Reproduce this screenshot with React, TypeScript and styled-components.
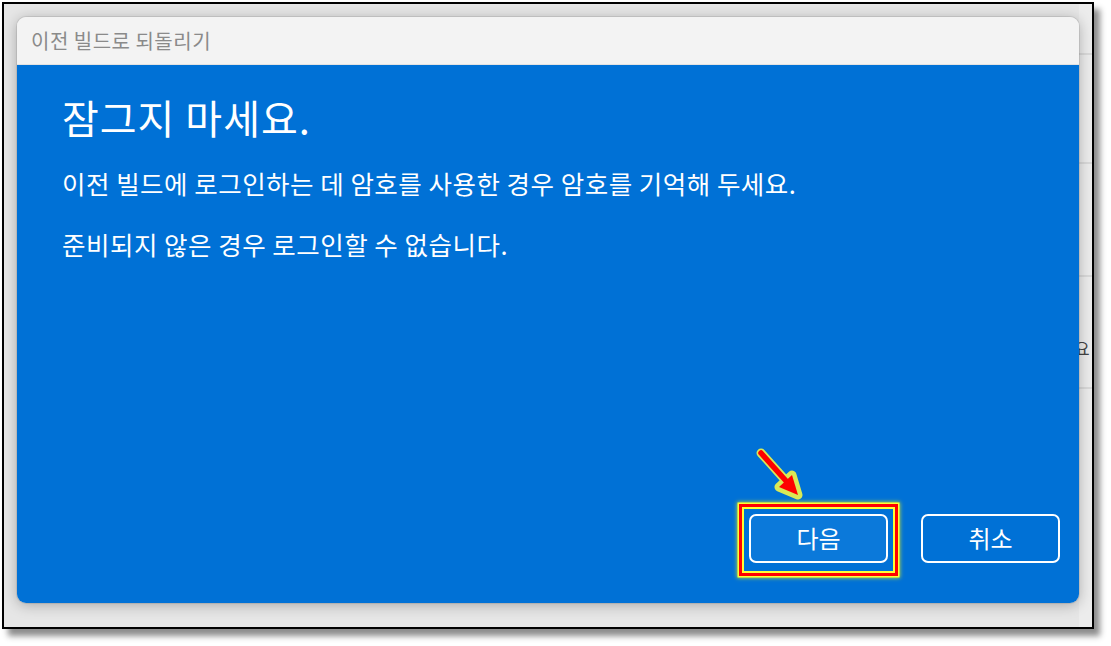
import React from "react";
import styled, { createGlobalStyle } from "styled-components";

const Global = createGlobalStyle`
  html, body {
    margin: 0;
    padding: 0;
    background: #ffffff;
  }
  body {
    font-family: "Noto Sans CJK KR", "Noto Sans", sans-serif;
  }
`;

const Page = styled.div`
  width: 1111px;
  height: 646px;
  padding: 2px 0 0 2px;
  box-sizing: border-box;
`;

const Frame = styled.div`
  width: 1092px;
  height: 627px;
  box-sizing: border-box;
  border: 2px solid #000;
  background: #e6e6e6;
  box-shadow: 6px 7px 6px rgba(0, 0, 0, 0.45);
  display: flex;
  padding: 13px 0 0 13px;
  overflow: hidden;
`;

const Dialog = styled.div`
  width: 1062px;
  height: 586px;
  flex: none;
  display: flex;
  flex-direction: column;
  border-radius: 9px;
  overflow: hidden;
  box-shadow: 0 0 0 1px rgba(0, 0, 0, 0.08), 0 2px 14px rgba(0, 0, 0, 0.28);
  position: relative;
  z-index: 1;
`;

const TitleBar = styled.div`
  height: 48px;
  flex: none;
  background: #f3f3f3;
  border-bottom: 1px solid #e2e2e2;
  box-sizing: border-box;
  display: flex;
  align-items: center;
  padding-left: 14px;
  color: #8a8a8a;
  font-size: 20px;
  letter-spacing: 0.5px;
`;

const Body = styled.div`
  flex: 1;
  background: #0071d6;
  color: #fff;
  display: flex;
  flex-direction: column;
  padding: 25px 19px 40px 45px;
`;

const Heading = styled.h1`
  margin: 0;
  font-weight: 400;
  font-size: 40px;
  line-height: 54px;
  letter-spacing: 1px;
`;

const Para = styled.p<{ $top: number }>`
  margin: 0;
  font-size: 25.5px;
  line-height: 36px;
  letter-spacing: 0.5px;
  margin-top: ${(p) => p.$top}px;
`;

const Actions = styled.div`
  margin-top: auto;
  display: flex;
  justify-content: flex-end;
  gap: 33px;
`;

const Button = styled.button<{ $primary?: boolean }>`
  width: 139px;
  height: 49px;
  box-sizing: border-box;
  border: 2.5px solid #fff;
  border-radius: 7px;
  background: ${(p) => (p.$primary ? "#0b79da" : "#0071d6")};
  color: #fff;
  font-family: "Noto Sans CJK KR", sans-serif;
  font-size: 24px;
  padding: 0 0 2px;
`;

const Highlight = styled.div`
  position: relative;
  margin: -10px -10px -13px -10px;
  padding: 7px 7px 10px 7px;
  border: 3px solid #ff0000;
  box-shadow: 0 0 0 1.5px #ffff33, 0 0 4px 2px rgba(255, 255, 0, 0.7),
    inset 0 0 0 2px #ffff33;
`;

const Arrow = styled.svg`
  position: absolute;
  left: 8px;
  top: -62px;
  width: 60px;
  height: 58px;
  overflow: visible;
`;

const Behind = styled.div`
  flex: 1;
  display: flex;
  flex-direction: column;
  background: #ececec;
  margin-top: -13px;
  overflow: hidden;
`;

const BehindRow = styled.div<{ $h: number }>`
  height: ${(p) => p.$h}px;
  flex: none;
  border-bottom: 2px solid #d9d9d9;
  display: flex;
  align-items: center;
  overflow: hidden;
`;

const Clipped = styled.span`
  font-size: 17px;
  color: #444;
  margin: 30px 0 0 -5px;
  white-space: nowrap;
`;

export default function App() {
  return (
    <>
      <Global />
      <Page>
        <Frame>
          <Dialog>
            <TitleBar>이전 빌드로 되돌리기</TitleBar>
            <Body>
              <Heading>잠그지 마세요.</Heading>
              <Para $top={21}>
                이전 빌드에 로그인하는 데 암호를 사용한 경우 암호를 기억해 두세요.
              </Para>
              <Para $top={25}>준비되지 않은 경우 로그인할 수 없습니다.</Para>
              <Actions>
                <Highlight>
                  <Arrow viewBox="0 0 60 58">
                    <g
                      stroke="#ffff40"
                      strokeWidth="9"
                      strokeLinecap="round"
                      strokeLinejoin="round"
                      fill="#ffff40"
                      opacity="0.85"
                    >
                      <line x1="11" y1="8" x2="37" y2="37" />
                      <polygon points="48,50 29,42 42,30" />
                    </g>
                    <line
                      x1="11"
                      y1="8"
                      x2="37"
                      y2="37"
                      stroke="#ff0000"
                      strokeWidth="5.5"
                      strokeLinecap="round"
                    />
                    <polygon points="48,50 29,42 42,30" fill="#ff0000" />
                  </Arrow>
                  <Button $primary>다음</Button>
                </Highlight>
                <Button>취소</Button>
              </Actions>
            </Body>
          </Dialog>
          <Behind>
            <BehindRow $h={49} />
            <BehindRow $h={107} />
            <BehindRow $h={111} />
            <BehindRow $h={110}>
              <Clipped>요</Clipped>
            </BehindRow>
          </Behind>
        </Frame>
      </Page>
    </>
  );
}
